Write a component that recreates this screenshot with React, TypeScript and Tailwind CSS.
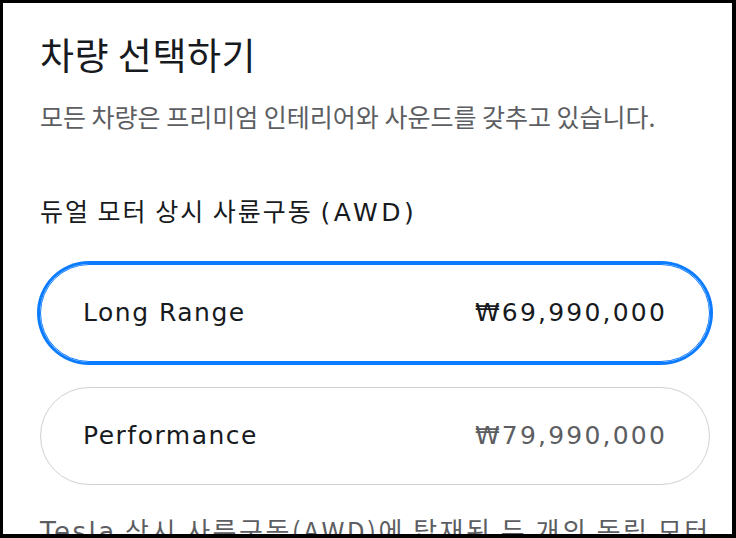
const KR = "font-['Noto_Sans_CJK_KR',sans-serif]";
const LATIN = "font-['DejaVu_Sans','Noto_Sans_CJK_KR',sans-serif]";

const trims = [
  { name: "Long Range", price: "₩69,990,000", selected: true },
  { name: "Performance", price: "₩79,990,000", selected: false },
];

export default function App() {
  return (
    <div className="w-[736px] h-[538px] bg-black pt-[3px] pl-[3px] pr-[4px] pb-[4px] overflow-hidden">
      <div className="bg-white h-full overflow-hidden pl-[37px] pr-[22px] pt-[31px]">
        <h1 className={`${KR} text-[37px] leading-[40px] tracking-[0.5px] text-[#171a20]`}>차량 선택하기</h1>
        <p className={`${KR} mt-[27px] text-[25px] leading-[30px] text-[#5c5e62] whitespace-nowrap`}>
          모든 차량은 프리미엄 인테리어와 사운드를 갖추고 있습니다.
        </p>
        <h2 className={`${KR} mt-[64px] text-[25px] leading-[30px] tracking-[2px] text-[#171a20]`}>
          듀얼 모터 상시 사륜구동{" "}
          <span className={`${LATIN} text-[25px] tracking-[3.5px]`}>(AWD)</span>
        </h2>

        <div className="mt-[36px] flex flex-col gap-[25px]">
          {trims.map((t) => (
            <div
              key={t.name}
              className={`h-[98px] w-[670px] rounded-full border flex items-center justify-between px-[42px] ${
                t.selected
                  ? "border-[#0b7bff] shadow-[0_0_0_3px_#0b7bff]"
                  : "border-[#d0d1d2]"
              }`}
            >
              <span className={`${LATIN} text-[25px] tracking-[1.5px] text-[#171a20]`}>{t.name}</span>
              <span
                className={`${LATIN} text-[25px] tracking-[2.2px] ${
                  t.selected ? "text-[#171a20]" : "text-[#5c5e62]"
                }`}
              >
                {t.price}
              </span>
            </div>
          ))}
        </div>

        <p className={`${KR} mt-[28px] w-[674px] text-[26px] leading-[34px] tracking-[2.5px] text-[#5c5e62]`}>
          <span className={LATIN}>Tesla</span> 상시 사륜구동(AWD)에 탑재된 두 개의 독립 모터는 어떤 도로 조건에서도
          향상된 핸들링과 견인력을 제공합니다.
        </p>
      </div>
    </div>
  );
}
